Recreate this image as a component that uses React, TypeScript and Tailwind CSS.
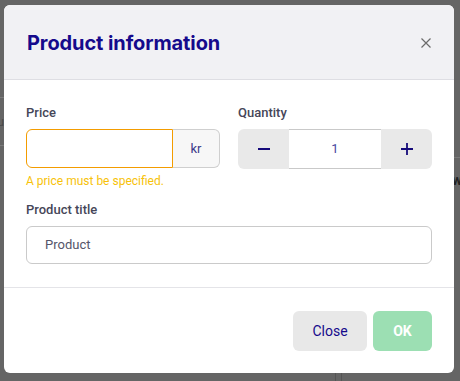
import React from "react";

export default function App() {
  return (
    <div
      className="relative w-[460px] h-[381px] overflow-hidden bg-[#656565]"
      style={{ fontFamily: "Roboto, 'Liberation Sans', Arial, sans-serif" }}
    >
      {/* faint page underneath the overlay */}
      <div className="absolute left-0 top-[97px] w-[4px] h-px bg-[#7a7a7a]" />
      <div className="absolute left-0 top-[145px] w-[4px] h-px bg-[#7a7a7a]" />
      <div className="absolute left-[-3px] top-[112px] text-[13px] text-[#4a4a4a]">u</div>
      <div className="absolute left-[454px] top-[157px] w-[6px] h-px bg-[#7a7a7a]" />
      <div className="absolute left-[452px] top-[170px] text-[14px] font-bold text-[#222]">w</div>
      <div className="absolute left-[335px] top-[373px] w-px h-[8px] bg-[#555]" />
      <div className="absolute left-[341px] top-[373px] w-px h-[8px] bg-[#555]" />

      <div className="absolute left-[4px] top-[5px] w-[450px] h-[368px] rounded-[6px] bg-white overflow-hidden flex flex-col">
        {/* header */}
        <div className="h-[75px] shrink-0 flex items-center justify-between pl-[23px] pr-[23px] bg-[#f1f1f4] border-b border-[#dedee3]">
          <h2
            className="text-[20px] font-bold text-[#150a8c] tracking-[-0.1px] mt-[2px]"
            style={{ fontFamily: "Inter, 'Noto Sans', sans-serif" }}
          >
            Product information
          </h2>
          <svg width="10" height="10" viewBox="0 0 10 10" className="mt-[2px]">
            <path d="M0.5 0.5 L9.5 9.5 M9.5 0.5 L0.5 9.5" stroke="#6b6b6b" strokeWidth="1.2" />
          </svg>
        </div>

        {/* body */}
        <div className="px-[22px] pt-[25px] h-[208px] shrink-0 border-b border-[#e4e4e8]">
          <div className="flex gap-[18px]">
            <div className="w-[194px]">
              <div className="text-[13px] font-medium text-[#464658] leading-[16px]">Price</div>
              <div className="flex mt-[8px] h-[39px]">
                <input
                  className="w-[147px] h-full rounded-l-[6px] border border-[#f39c00] outline-none"
                  defaultValue=""
                />
                <div className="flex-1 flex items-center justify-center bg-[#f7f7f7] border border-l-0 border-[#cfcfcf] rounded-r-[6px] text-[13px] text-[#3b3b8a]">
                  kr
                </div>
              </div>
              <div className="mt-[5px] text-[12px] text-[#f7c20a] leading-[16px]">
                A price must be specified.
              </div>
            </div>
            <div className="w-[194px]">
              <div className="text-[13px] font-medium text-[#464658] leading-[16px]">Quantity</div>
              <div className="flex mt-[8px] h-[40px] rounded-[6px] bg-[#e9e9e9] overflow-hidden">
                <button className="w-[51px] flex items-center justify-center">
                  <svg width="12" height="12" viewBox="0 0 12 12">
                    <path d="M0 6 H12" stroke="#150a7a" strokeWidth="1.8" />
                  </svg>
                </button>
                <div className="w-[92px] bg-white border-y border-[#c9c9c9] flex items-center justify-center text-[13px] text-[#4747a0]">
                  1
                </div>
                <button className="flex-1 flex items-center justify-center">
                  <svg width="12" height="12" viewBox="0 0 12 12">
                    <path d="M0 6 H12 M6 0 V12" stroke="#150a7a" strokeWidth="1.8" />
                  </svg>
                </button>
              </div>
            </div>
          </div>

          <div className="mt-[13px] text-[13px] font-medium text-[#464658] leading-[16px]">Product title</div>
          <div className="mt-[8px] h-[38px] w-[406px] rounded-[6px] border border-[#cacaca] flex items-center pl-[18px] text-[13px] text-[#55556a]">
            Product
          </div>
        </div>

        {/* footer */}
        <div className="flex justify-end gap-[6px] pr-[22px] pt-[23px]">
          <button className="w-[74px] h-[40px] rounded-[6px] bg-[#e8e8e8] text-[14px] text-[#150a8c]">
            Close
          </button>
          <button className="w-[59px] h-[40px] rounded-[6px] bg-[#9cdfb3] text-[14px] font-bold text-white">
            OK
          </button>
        </div>
      </div>
    </div>
  );
}
